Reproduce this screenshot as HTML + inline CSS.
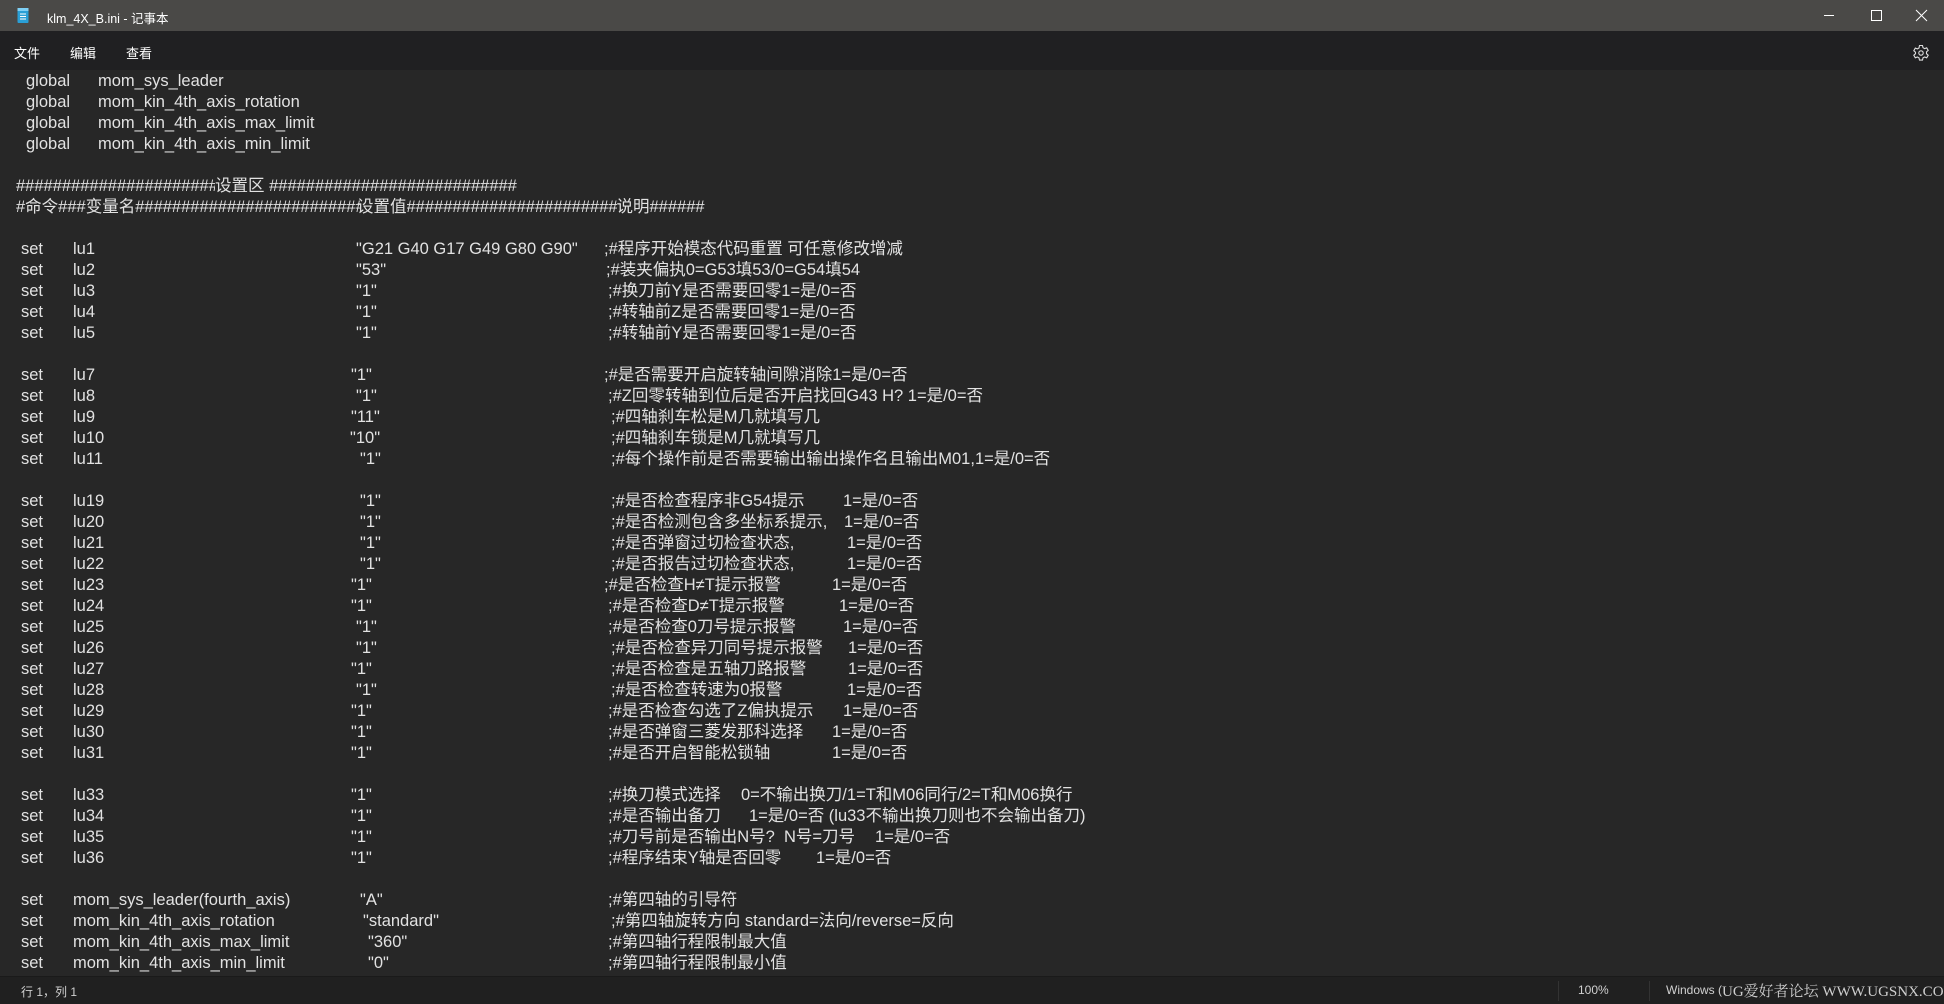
<!DOCTYPE html>
<html><head><meta charset="utf-8"><style>
*{margin:0;padding:0;box-sizing:border-box}
body{width:1944px;height:1004px;background:#272727;overflow:hidden;position:relative;font-family:"Liberation Sans","Noto Sans CJK SC",sans-serif;color:#e2e2e2}
#title{position:absolute;left:0;top:0;width:1944px;height:31px;background:#4a4947}
#menu{position:absolute;left:0;top:31px;width:1944px;height:39px;background:#202022}
#status{position:absolute;left:0;top:976px;width:1944px;height:28px;background:#202020;border-top:1px solid #1a1a1a;font-size:12px;color:#d0d0d0;white-space:nowrap}
#ed{position:absolute;left:0;top:2px;width:1944px;height:970px}
.t{position:absolute;white-space:pre;font-size:16.5px;line-height:21px;height:21px}
.h{display:inline-block;overflow:hidden;vertical-align:top;white-space:pre}
</style></head><body>
<div id="title">
<svg style="position:absolute;left:17px;top:8px" width="12" height="15"><rect x="0.5" y="1" width="11" height="14" rx="1" fill="#2a9fd6"/><rect x="0.5" y="0" width="11" height="3" fill="#7fd0f5"/><path d="M3 6h6M3 8.5h6M3 11h6" stroke="#fff" stroke-width="1"/></svg>
<div style="position:absolute;left:47px;top:8px;font-size:12.5px;color:#fff">klm_4X_B.ini - 记事本</div>
<svg style="position:absolute;left:1820px;top:8px" width="110" height="16"><path d="M4 7.5h10" stroke="#fff"/><rect x="51.5" y="2.5" width="10" height="10" fill="none" stroke="#fff"/><path d="M96 2l11 11M107 2l-11 11" stroke="#fff"/></svg>
</div>
<div id="menu">
<div style="position:absolute;left:14px;top:12px;font-size:13px;color:#fff">文件</div>
<div style="position:absolute;left:70px;top:12px;font-size:13px;color:#fff">编辑</div>
<div style="position:absolute;left:126px;top:12px;font-size:13px;color:#fff">查看</div>
<svg style="position:absolute;left:1912px;top:13px" width="18" height="18" viewBox="0 0 18 18"><path d="M7.5 1.5h3l.5 2.2 1.6.9 2.1-.8 1.5 2.6-1.7 1.5v1.8l1.7 1.5-1.5 2.6-2.1-.8-1.6.9-.5 2.2h-3l-.5-2.2-1.6-.9-2.1.8-1.5-2.6 1.7-1.5V8.2L1.8 6.7l1.5-2.6 2.1.8 1.6-.9z" fill="none" stroke="#ddd" stroke-width="1.1"/><circle cx="9" cy="9" r="2.2" fill="none" stroke="#ddd" stroke-width="1.1"/></svg>
</div>
<div id="ed">
<div class="t" style="left:26px;top:69px">global</div><div class="t" style="left:98px;top:69px">mom_sys_leader</div>
<div class="t" style="left:26px;top:90px">global</div><div class="t" style="left:98px;top:90px">mom_kin_4th_axis_rotation</div>
<div class="t" style="left:26px;top:111px">global</div><div class="t" style="left:98px;top:111px">mom_kin_4th_axis_max_limit</div>
<div class="t" style="left:26px;top:132px">global</div><div class="t" style="left:98px;top:132px">mom_kin_4th_axis_min_limit</div>

<div class="t" style="left:16px;top:174px"><span class="h" style="width:199px">##########################</span>设置区 <span class="h" style="width:248px">####################################</span></div>
<div class="t" style="left:16px;top:195px">#命令###变量名<span class="h" style="width:226px">######################################</span></div>
<div class="t" style="left:357px;top:195px">设置值<span class="h" style="width:210px">###################################</span>说明######</div>

<div class="t" style="left:21px;top:237px">set</div><div class="t" style="left:73px;top:237px">lu1</div><div class="t" style="left:356px;top:237px">"G21 G40 G17 G49 G80 G90"</div><div class="t" style="left:604px;top:237px">;#程序开始模态代码重置 可任意修改增减</div>
<div class="t" style="left:21px;top:258px">set</div><div class="t" style="left:73px;top:258px">lu2</div><div class="t" style="left:356px;top:258px">"53"</div><div class="t" style="left:606px;top:258px">;#装夹偏执0=G53填53/0=G54填54</div>
<div class="t" style="left:21px;top:279px">set</div><div class="t" style="left:73px;top:279px">lu3</div><div class="t" style="left:356px;top:279px">"1"</div><div class="t" style="left:608px;top:279px">;#换刀前Y是否需要回零1=是/0=否</div>
<div class="t" style="left:21px;top:300px">set</div><div class="t" style="left:73px;top:300px">lu4</div><div class="t" style="left:356px;top:300px">"1"</div><div class="t" style="left:608px;top:300px">;#转轴前Z是否需要回零1=是/0=否</div>
<div class="t" style="left:21px;top:321px">set</div><div class="t" style="left:73px;top:321px">lu5</div><div class="t" style="left:356px;top:321px">"1"</div><div class="t" style="left:608px;top:321px">;#转轴前Y是否需要回零1=是/0=否</div>

<div class="t" style="left:21px;top:363px">set</div><div class="t" style="left:73px;top:363px">lu7</div><div class="t" style="left:351px;top:363px">"1"</div><div class="t" style="left:604px;top:363px">;#是否需要开启旋转轴间隙消除1=是/0=否</div>
<div class="t" style="left:21px;top:384px">set</div><div class="t" style="left:73px;top:384px">lu8</div><div class="t" style="left:356px;top:384px">"1"</div><div class="t" style="left:608px;top:384px">;#Z回零转轴到位后是否开启找回G43 H? 1=是/0=否</div>
<div class="t" style="left:21px;top:405px">set</div><div class="t" style="left:73px;top:405px">lu9</div><div class="t" style="left:351px;top:405px">"11"</div><div class="t" style="left:611px;top:405px">;#四轴刹车松是M几就填写几</div>
<div class="t" style="left:21px;top:426px">set</div><div class="t" style="left:73px;top:426px">lu10</div><div class="t" style="left:350px;top:426px">"10"</div><div class="t" style="left:611px;top:426px">;#四轴刹车锁是M几就填写几</div>
<div class="t" style="left:21px;top:447px">set</div><div class="t" style="left:73px;top:447px">lu11</div><div class="t" style="left:360px;top:447px">"1"</div><div class="t" style="left:611px;top:447px">;#每个操作前是否需要输出输出操作名且输出M01,1=是/0=否</div>

<div class="t" style="left:21px;top:489px">set</div><div class="t" style="left:73px;top:489px">lu19</div><div class="t" style="left:360px;top:489px">"1"</div><div class="t" style="left:611px;top:489px">;#是否检查程序非G54提示</div><div class="t" style="left:843px;top:489px">1=是/0=否</div>
<div class="t" style="left:21px;top:510px">set</div><div class="t" style="left:73px;top:510px">lu20</div><div class="t" style="left:360px;top:510px">"1"</div><div class="t" style="left:611px;top:510px">;#是否检测包含多坐标系提示,</div><div class="t" style="left:844px;top:510px">1=是/0=否</div>
<div class="t" style="left:21px;top:531px">set</div><div class="t" style="left:73px;top:531px">lu21</div><div class="t" style="left:360px;top:531px">"1"</div><div class="t" style="left:611px;top:531px">;#是否弹窗过切检查状态,</div><div class="t" style="left:847px;top:531px">1=是/0=否</div>
<div class="t" style="left:21px;top:552px">set</div><div class="t" style="left:73px;top:552px">lu22</div><div class="t" style="left:360px;top:552px">"1"</div><div class="t" style="left:611px;top:552px">;#是否报告过切检查状态,</div><div class="t" style="left:847px;top:552px">1=是/0=否</div>
<div class="t" style="left:21px;top:573px">set</div><div class="t" style="left:73px;top:573px">lu23</div><div class="t" style="left:351px;top:573px">"1"</div><div class="t" style="left:604px;top:573px">;#是否检查H≠T提示报警</div><div class="t" style="left:832px;top:573px">1=是/0=否</div>
<div class="t" style="left:21px;top:594px">set</div><div class="t" style="left:73px;top:594px">lu24</div><div class="t" style="left:351px;top:594px">"1"</div><div class="t" style="left:608px;top:594px">;#是否检查D≠T提示报警</div><div class="t" style="left:839px;top:594px">1=是/0=否</div>
<div class="t" style="left:21px;top:615px">set</div><div class="t" style="left:73px;top:615px">lu25</div><div class="t" style="left:356px;top:615px">"1"</div><div class="t" style="left:608px;top:615px">;#是否检查0刀号提示报警</div><div class="t" style="left:843px;top:615px">1=是/0=否</div>
<div class="t" style="left:21px;top:636px">set</div><div class="t" style="left:73px;top:636px">lu26</div><div class="t" style="left:356px;top:636px">"1"</div><div class="t" style="left:611px;top:636px">;#是否检查异刀同号提示报警</div><div class="t" style="left:848px;top:636px">1=是/0=否</div>
<div class="t" style="left:21px;top:657px">set</div><div class="t" style="left:73px;top:657px">lu27</div><div class="t" style="left:351px;top:657px">"1"</div><div class="t" style="left:611px;top:657px">;#是否检查是五轴刀路报警</div><div class="t" style="left:848px;top:657px">1=是/0=否</div>
<div class="t" style="left:21px;top:678px">set</div><div class="t" style="left:73px;top:678px">lu28</div><div class="t" style="left:356px;top:678px">"1"</div><div class="t" style="left:611px;top:678px">;#是否检查转速为0报警</div><div class="t" style="left:847px;top:678px">1=是/0=否</div>
<div class="t" style="left:21px;top:699px">set</div><div class="t" style="left:73px;top:699px">lu29</div><div class="t" style="left:351px;top:699px">"1"</div><div class="t" style="left:608px;top:699px">;#是否检查勾选了Z偏执提示</div><div class="t" style="left:843px;top:699px">1=是/0=否</div>
<div class="t" style="left:21px;top:720px">set</div><div class="t" style="left:73px;top:720px">lu30</div><div class="t" style="left:351px;top:720px">"1"</div><div class="t" style="left:608px;top:720px">;#是否弹窗三菱发那科选择</div><div class="t" style="left:832px;top:720px">1=是/0=否</div>
<div class="t" style="left:21px;top:741px">set</div><div class="t" style="left:73px;top:741px">lu31</div><div class="t" style="left:351px;top:741px">"1"</div><div class="t" style="left:608px;top:741px">;#是否开启智能松锁轴</div><div class="t" style="left:832px;top:741px">1=是/0=否</div>

<div class="t" style="left:21px;top:783px">set</div><div class="t" style="left:73px;top:783px">lu33</div><div class="t" style="left:351px;top:783px">"1"</div><div class="t" style="left:608px;top:783px">;#换刀模式选择</div><div class="t" style="left:741px;top:783px">0=不输出换刀/1=T和M06同行/2=T和M06换行</div>
<div class="t" style="left:21px;top:804px">set</div><div class="t" style="left:73px;top:804px">lu34</div><div class="t" style="left:351px;top:804px">"1"</div><div class="t" style="left:608px;top:804px">;#是否输出备刀</div><div class="t" style="left:749px;top:804px">1=是/0=否 (lu33不输出换刀则也不会输出备刀)</div>
<div class="t" style="left:21px;top:825px">set</div><div class="t" style="left:73px;top:825px">lu35</div><div class="t" style="left:351px;top:825px">"1"</div><div class="t" style="left:608px;top:825px">;#刀号前是否输出N号?</div><div class="t" style="left:784px;top:825px">N号=刀号</div><div class="t" style="left:875px;top:825px">1=是/0=否</div>
<div class="t" style="left:21px;top:846px">set</div><div class="t" style="left:73px;top:846px">lu36</div><div class="t" style="left:351px;top:846px">"1"</div><div class="t" style="left:608px;top:846px">;#程序结束Y轴是否回零</div><div class="t" style="left:816px;top:846px">1=是/0=否</div>

<div class="t" style="left:21px;top:888px">set</div><div class="t" style="left:73px;top:888px">mom_sys_leader(fourth_axis)</div><div class="t" style="left:360px;top:888px">"A"</div><div class="t" style="left:608px;top:888px">;#第四轴的引导符</div>
<div class="t" style="left:21px;top:909px">set</div><div class="t" style="left:73px;top:909px">mom_kin_4th_axis_rotation</div><div class="t" style="left:363px;top:909px">"standard"</div><div class="t" style="left:611px;top:909px">;#第四轴旋转方向 standard=法向/reverse=反向</div>
<div class="t" style="left:21px;top:930px">set</div><div class="t" style="left:73px;top:930px">mom_kin_4th_axis_max_limit</div><div class="t" style="left:368px;top:930px">"360"</div><div class="t" style="left:608px;top:930px">;#第四轴行程限制最大值</div>
<div class="t" style="left:21px;top:951px">set</div><div class="t" style="left:73px;top:951px">mom_kin_4th_axis_min_limit</div><div class="t" style="left:368px;top:951px">"0"</div><div class="t" style="left:608px;top:951px">;#第四轴行程限制最小值</div>
</div>
<div id="status">
<div style="position:absolute;left:21px;top:6px">行 1，列 1</div>
<div style="position:absolute;left:1558px;top:4px;width:1px;height:20px;background:#333"></div>
<div style="position:absolute;left:1578px;top:6px">100%</div>
<div style="position:absolute;left:1649px;top:4px;width:1px;height:20px;background:#333"></div>
<div style="position:absolute;left:1666px;top:6px">Windows (CRLF)</div>
<div style="position:absolute;left:1722px;top:3px;font-family:'Liberation Serif','Noto Serif CJK SC',serif;font-size:15px;color:#cfcfcf;background:#202020;white-space:nowrap">UG爱好者论坛 WWW.UGSNX.COM</div>
</div>
</body></html>
